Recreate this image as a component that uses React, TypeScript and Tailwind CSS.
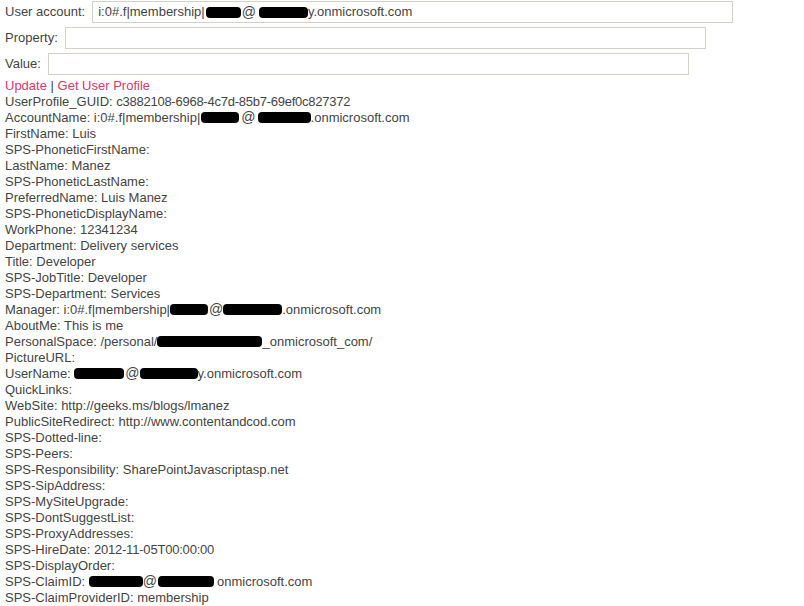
import React from "react";

function R({ w, ml = 0 }: { w: number; ml?: number }) {
  return (
    <span
      className="inline-block h-[11px] bg-black rounded-[4px] align-[-1px]"
      style={{ width: w, marginLeft: ml }}
    />
  );
}

function At({ ml = 0 }: { ml?: number }) {
  return (
    <span className="text-[14px] leading-none" style={{ marginLeft: ml }}>
      @
    </span>
  );
}

function Line({ children }: { children: React.ReactNode }) {
  return <div className="h-[16px] leading-[16px] whitespace-nowrap">{children}</div>;
}

export default function App() {
  const plain: [string, string][] = [
    ["FirstName", "Luis"],
    ["SPS-PhoneticFirstName", ""],
    ["LastName", "Manez"],
    ["SPS-PhoneticLastName", ""],
    ["PreferredName", "Luis Manez"],
    ["SPS-PhoneticDisplayName", ""],
    ["WorkPhone", "12341234"],
    ["Department", "Delivery services"],
    ["Title", "Developer"],
    ["SPS-JobTitle", "Developer"],
    ["SPS-Department", "Services"],
  ];
  const plain2: [string, string][] = [
    ["QuickLinks", ""],
    ["WebSite", "http://geeks.ms/blogs/lmanez"],
    ["PublicSiteRedirect", "http://www.contentandcod.com"],
    ["SPS-Dotted-line", ""],
    ["SPS-Peers", ""],
    ["SPS-Responsibility", "SharePointJavascriptasp.net"],
    ["SPS-SipAddress", ""],
    ["SPS-MySiteUpgrade", ""],
    ["SPS-DontSuggestList", ""],
    ["SPS-ProxyAddresses", ""],
  ];
  const plain3: [string, string][] = [["SPS-DisplayOrder", ""]];
  const kv = ([k, v]: [string, string]) => (
    <Line key={k}>
      {k}: {v}
    </Line>
  );
  const inputCls =
    "h-[22px] w-[641px] border border-[#d3cfc9] bg-white px-[5px] text-[13px] text-[#444] outline-none";
  return (
    <div
      className="w-[804px] h-[606px] bg-white text-[13px] text-[#444] pl-[5px] overflow-hidden"
      style={{ fontFamily: '"Liberation Sans", Arial, sans-serif' }}
    >
      <div className="flex flex-col gap-[4px] pt-[1px]">
        <div className="flex items-center h-[22px]">
          <span className="mr-[7px]">User account:</span>
          <div className={inputCls + " flex items-center whitespace-nowrap"}>
            i:0#.f|membership|<R w={35} ml={1} />
            <At ml={1} />
            <R w={49} ml={3} />
            <span>y.onmicrosoft.com</span>
          </div>
        </div>
        <div className="flex items-center h-[22px]">
          <span className="mr-[7px]">Property:</span>
          <input className={inputCls} />
        </div>
        <div className="flex items-center h-[22px]">
          <span className="mr-[7px]">Value:</span>
          <input className={inputCls} />
        </div>
      </div>
      <div className="mt-[3px]">
        <Line>
          <a className="text-[#d43a6c] cursor-pointer">Update</a> |{" "}
          <a className="text-[#d43a6c] cursor-pointer">Get User Profile</a>
        </Line>
        <Line>
          UserProfile_GUID: <span className="tracking-[-0.25px]">c3882108-6968-4c7d-85b7-69ef0c827372</span>
        </Line>
        <Line>
          AccountName: i:0#.f|membership|<R w={38} ml={1} />
          <At ml={2} />
          <R w={53} ml={2} />
          .onmicrosoft.com
        </Line>
        {plain.map(kv)}
        <Line>
          Manager: i:0#.f|membership|<R w={38} ml={0} />
          <At ml={1} />
          <R w={59} ml={0} />
          .onmicrosoft.com
        </Line>
        <Line>AboutMe: This is me</Line>
        <Line>
          PersonalSpace: /personal/<R w={105} ml={0} />
          _onmicrosoft_com/
        </Line>
        <Line>PictureURL:</Line>
        <Line>
          UserName: <R w={50} />
          <At ml={1} />
          <R w={58} ml={0} />
          y.onmicrosoft.com
        </Line>
        {plain2.map(kv)}
        <Line>
          SPS-HireDate: <span className="tracking-[-0.2px]">2012-11-05T00:00:00</span>
        </Line>
        {plain3.map(kv)}
        <Line>
          SPS-ClaimID: <R w={54} />
          <At ml={0} />
          <R w={56} ml={1} />
          <span className="ml-[3px]">onmicrosoft.com</span>
        </Line>
        <Line>SPS-ClaimProviderID: membership</Line>
      </div>
    </div>
  );
}
